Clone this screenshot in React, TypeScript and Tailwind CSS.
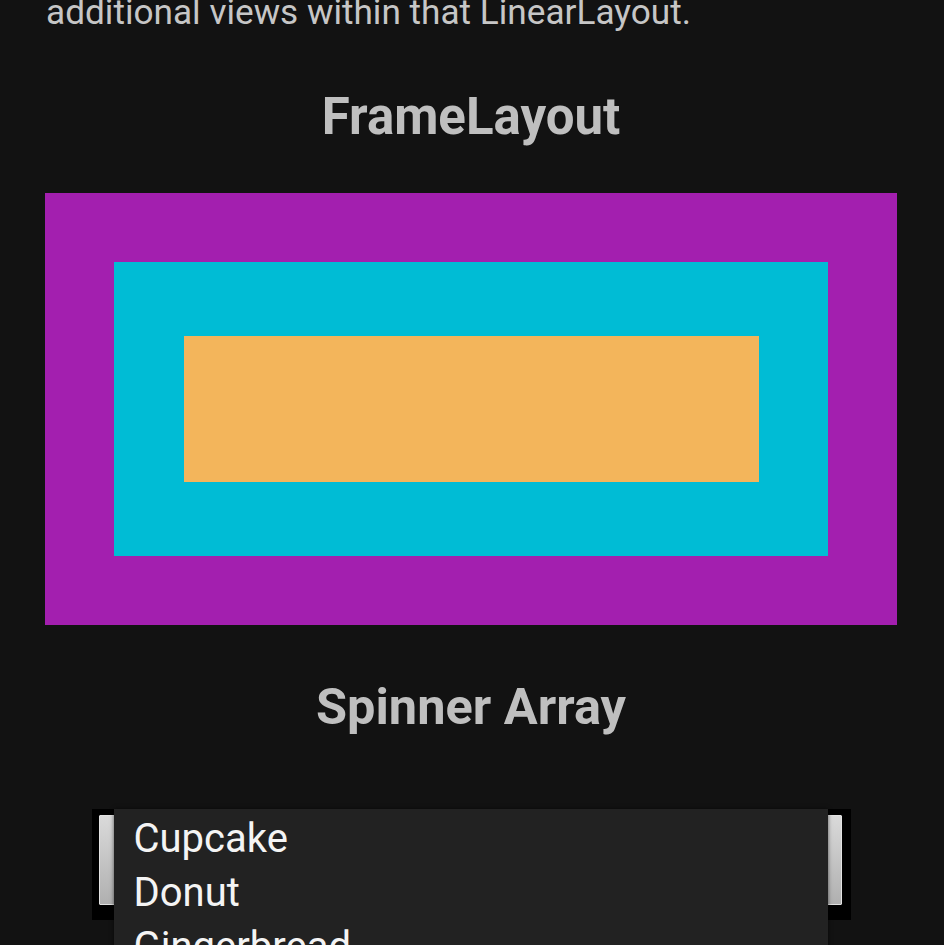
export default function App() {
  const items = ["Cupcake", "Donut", "Gingerbread", "Honeycomb"];

  return (
    <div
      className="h-[945px] w-[944px] overflow-hidden bg-[#121212]"
      style={{ fontFamily: "Roboto, 'Liberation Sans', sans-serif" }}
    >
      <div className="ml-[45px] w-[852px]">
        {/* intro text, cut by the top edge */}
        <p className="-mt-[11px] pl-[1px] text-[35.2px] leading-[46px] text-[#c6c6c6]">
          additional views within that LinearLayout.
        </p>

        <h2 className="mt-[57px] text-center text-[51px] leading-[50px] font-bold text-[#bfbfbf]">
          FrameLayout
        </h2>

        {/* nested frames */}
        <div className="mt-[51px] flex h-[432px] w-[852px] bg-[#a31faf] p-[69px]">
          <div className="flex flex-1 bg-[#00bcd5] pt-[74px] pr-[69px] pb-[74px] pl-[70px]">
            <div className="flex-1 bg-[#f3b55b]" />
          </div>
        </div>

        <h2 className="mt-[57px] text-center text-[50.5px] leading-[50px] font-bold text-[#bfbfbf]">
          Spinner Array
        </h2>

        {/* spinner with its open dropdown */}
        <div className="relative mx-auto mt-[77px] flex h-[111px] w-[759px] justify-between bg-black pt-[6px] pr-[9px] pb-[15px] pl-[7px]">
          <div className="w-[16px] rounded-[1px] border border-[#e2e2e2] bg-linear-to-b from-[#dadada] to-[#b0b0b0]" />
          <div className="w-[16px] rounded-[1px] border border-[#e2e2e2] bg-linear-to-b from-[#dadada] to-[#b0b0b0]" />

          <div className="absolute top-0 left-[22px] w-[714px] bg-[#222222] pt-[3px] shadow-[0_0_4px_rgba(0,0,0,0.6)]">
            {items.map((item) => (
              <div key={item} className="h-[54px] pl-[20px] text-[40px] leading-[54px] text-[#f4f4f4]">
                {item}
              </div>
            ))}
          </div>
        </div>
      </div>
    </div>
  );
}
